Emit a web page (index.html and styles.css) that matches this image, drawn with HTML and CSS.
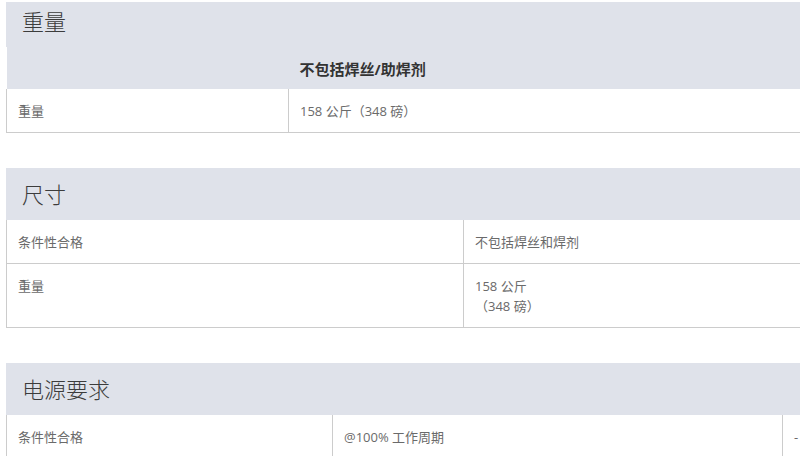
FILE: index.html
```html
<!DOCTYPE html>
<html lang="zh-CN">
<head>
<meta charset="utf-8">
<title>规格</title>
<link rel="stylesheet" href="styles.css">
</head>
<body>
<div class="page">
  <section class="spec spec--cut">
    <h2 class="spec-title">重量</h2>
    <table class="spec-table">
      <colgroup><col class="col-282"><col></colgroup>
      <thead>
        <tr class="spec-sub"><th></th><th>不包括焊丝/助焊剂</th></tr>
      </thead>
      <tbody>
        <tr><td>重量</td><td>158 公斤（348 磅）</td></tr>
      </tbody>
    </table>
  </section>

  <section class="spec">
    <h2 class="spec-title">尺寸</h2>
    <table class="spec-table">
      <colgroup><col class="col-457"><col></colgroup>
      <tbody>
        <tr><td>条件性合格</td><td>不包括焊丝和焊剂</td></tr>
        <tr><td>重量</td><td>158 公斤<br>（348 磅）</td></tr>
      </tbody>
    </table>
  </section>

  <section class="spec">
    <h2 class="spec-title">电源要求</h2>
    <table class="spec-table">
      <colgroup><col class="col-326"><col class="col-450"><col></colgroup>
      <tbody>
        <tr><td>条件性合格</td><td>@100% 工作周期</td><td>-</td></tr>
      </tbody>
    </table>
  </section>
</div>
</body>
</html>
```

FILE: styles.css
```css
html, body {
  margin: 0;
  padding: 0;
  background: #ffffff;
}

body {
  font-family: "Open Sans", "Noto Sans CJK SC", sans-serif;
  color: #666666;
}

.page {
  width: 800px;
  height: 456px;
  overflow: hidden;
  padding: 2px 0 0 6px;
  box-sizing: border-box;
}

.spec {
  width: 900px;
  margin-bottom: 35px;
}

.spec-title {
  margin: 0;
  height: 52px;
  line-height: 52px;
  padding-left: 16px;
  background: #dfe2ea;
  font-size: 22px;
  font-weight: 300;
  color: #3c3c3c;
}

.spec--cut .spec-title {
  height: 45px;
  line-height: 38px;
}

.spec-table {
  width: 100%;
  table-layout: fixed;
  border-collapse: collapse;
  font-size: 13px;
}

.col-282 { width: 282px; }
.col-457 { width: 457px; }
.col-326 { width: 326px; }
.col-450 { width: 450px; }

.spec-sub th {
  background: #dfe2ea;
  height: 42px;
  padding: 0 11px;
  box-sizing: border-box;
  text-align: left;
  font-size: 15px;
  font-weight: bold;
  color: #333333;
  vertical-align: middle;
}

.spec-table td {
  border: 1px solid #cccccc;
  border-top: none;
  padding: 12px 11px 11px;
  line-height: 20px;
  vertical-align: top;
  color: #6a6a6a;
}

.spec-table tbody tr + tr td {
  border-top: 1px solid #cccccc;
}
```
